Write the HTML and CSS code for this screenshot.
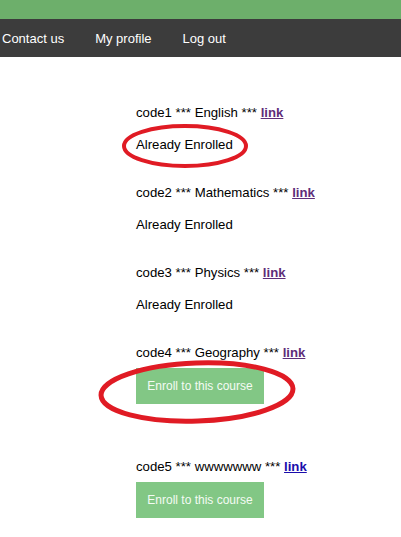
FILE: index.html
```html
<!DOCTYPE html>
<html>
<head>
<meta charset="utf-8">
<link rel="stylesheet" href="styles.css">
</head>
<body>
<div class="topbar"></div>
<nav class="nav">
  <a class="nav-item" href="#">Contact us</a>
  <a class="nav-item" href="#">My profile</a>
  <a class="nav-item" href="#">Log out</a>
</nav>
<main class="content">
  <div class="course">
    <p class="title">code1 *** English *** <a class="link visited" href="#">link</a></p>
    <p class="status">Already Enrolled</p>
  </div>
  <div class="course">
    <p class="title">code2 *** Mathematics *** <a class="link visited" href="#">link</a></p>
    <p class="status">Already Enrolled</p>
  </div>
  <div class="course">
    <p class="title">code3 *** Physics *** <a class="link visited" href="#">link</a></p>
    <p class="status">Already Enrolled</p>
  </div>
  <div class="course">
    <p class="title">code4 *** Geography *** <a class="link visited" href="#">link</a></p>
    <button class="enroll">Enroll to this course</button>
  </div>
  <div class="course">
    <p class="title">code5 *** wwwwwww *** <a class="link" href="#">link</a></p>
    <button class="enroll">Enroll to this course</button>
  </div>
  <svg class="mark mark-1" width="128" height="46" viewBox="0 0 128 46">
    <ellipse cx="64" cy="23" rx="61" ry="20" fill="none" stroke="#e01b24" stroke-width="4"/>
  </svg>
  <svg class="mark mark-2" width="200" height="66" viewBox="0 0 200 66">
    <ellipse cx="100" cy="33" rx="96" ry="29" fill="none" stroke="#e01b24" stroke-width="5" transform="rotate(-2 100 33)"/>
  </svg>
</main>
</body>
</html>
```
FILE: styles.css
```css
html, body {
  margin: 0;
  padding: 0;
  background: #ffffff;
}
body {
  font-family: "Liberation Sans", Arial, sans-serif;
  font-size: 13.2px;
  color: #000;
}
.topbar {
  height: 19px;
  background: #6daf6b;
}
.nav {
  height: 38px;
  background: #3c3c3c;
  display: flex;
  align-items: center;
  padding-left: 2px;
  gap: 31px;
}
.nav-item {
  color: #ffffff;
  text-decoration: none;
  font-size: 13px;
  line-height: 16px;
  padding-top: 1px;
}
.content {
  position: relative;
  padding: 48px 0 0 136px;
  display: flex;
  flex-direction: column;
}
.course {
  display: flex;
  flex-direction: column;
  align-items: flex-start;
  margin-bottom: 32px;
}
.course:nth-child(4) {
  margin-bottom: 55px;
}
.title, .status {
  margin: 0;
  line-height: 16px;
}
.status {
  margin-top: 16px;
}
.link {
  font-weight: bold;
  color: #1a0dab;
  text-decoration: underline;
}
.link.visited {
  color: #5e2d79;
}
.enroll {
  margin-top: 7px;
  width: 128px;
  height: 36px;
  border: none;
  background: #82c785;
  color: #f4fbf4;
  font-family: "Liberation Sans", Arial, sans-serif;
  font-size: 12px;
  padding: 0;
}
.mark {
  position: absolute;
  pointer-events: none;
}
.mark-1 {
  left: 121px;
  top: 66px;
}
.mark-2 {
  left: 97px;
  top: 302px;
}
```
